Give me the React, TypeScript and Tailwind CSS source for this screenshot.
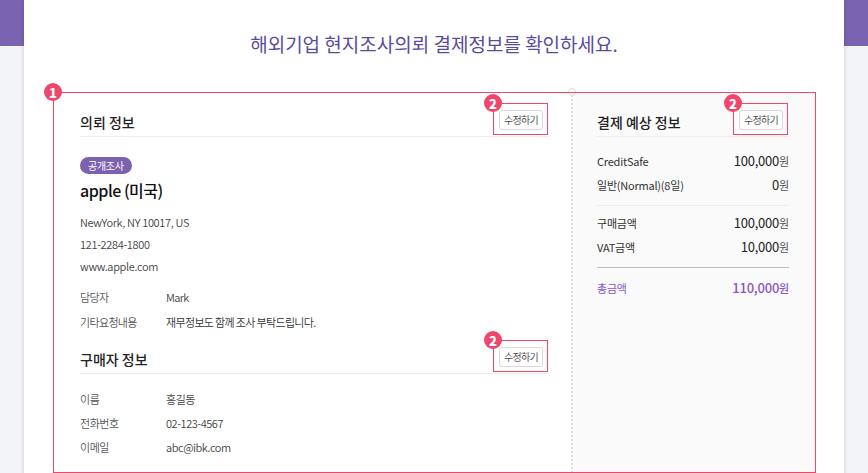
import React from 'react';

const RED = 'border-[#ef476b]';

function Badge({ n, className }: { n: number; className: string }) {
  return (
    <span
      className={`absolute flex h-[18px] w-[18px] items-center justify-center rounded-full bg-[#ef476b] text-[13px] font-extrabold leading-none text-white ${className}`}
    >
      {n}
    </span>
  );
}

function EditButton() {
  return (
    <span className="relative mb-[4px] mr-[6px] inline-flex">
      <button className="h-[20px] rounded-[3px] border border-[#d9d9d9] bg-white px-[4px] text-[10px] font-[350] leading-none tracking-[-0.07em] text-[#444]">
        수정하기
      </button>
      <span className={`pointer-events-none absolute -bottom-[5px] -left-[6px] -right-[5px] -top-[7px] border-[1.5px] ${RED}`} />
      <Badge n={2} className="-left-[15px] -top-[16px]" />
    </span>
  );
}

function SectionHeader({ title }: { title: string }) {
  return (
    <div className="flex h-[29px] items-center justify-between border-b border-[#ececec]">
      <h3 className="text-[14px] font-medium text-[#222]">{title}</h3>
      <EditButton />
    </div>
  );
}

function Amount({ value, purple }: { value: string; purple?: boolean }) {
  return (
    <span className={`text-[13px] ${purple ? 'font-medium text-[#8a57c6]' : 'text-[#222]'}`}>
      {value}
      <span className={`text-[11px] ${purple ? 'text-[#8a57c6]' : 'text-[#555]'}`}>원</span>
    </span>
  );
}

export default function App() {
  const buyer = [
    { label: '이름', value: '홍길동' },
    { label: '전화번호', value: '02-123-4567' },
    { label: '이메일', value: 'abc@ibk.com' },
  ];

  return (
    <div className="min-h-screen bg-[linear-gradient(to_bottom,#7a63b1_46px,#f3f4f7_46px)] font-['Noto_Sans_CJK_KR','Noto_Sans',sans-serif]">
      <div className="mx-[24px] bg-white pb-[40px] pt-[30px] shadow-[0_0_4px_rgba(0,0,0,0.18)]">
        <h1 className="text-center text-[19px] leading-[28px] text-[#5a4b9e]">
          해외기업 현지조사의뢰 결제정보를 확인하세요.
        </h1>

        {/* Content box */}
        <div className="relative ml-[29px] mr-[28px] mt-[34px] flex">
          {/* Left: 의뢰 정보 / 구매자 정보 */}
          <div className="w-[518px] shrink-0 pb-[14px] pl-[27px] pr-[22px] pt-[16px]">
            <SectionHeader title="의뢰 정보" />
            <span className="mt-[20px] inline-flex h-[17px] items-center rounded-full bg-[#7b61b0] px-[8px] text-[10px] tracking-[-0.03em] text-white">
              공개조사
            </span>
            <p className="mt-[3px] text-[16px] font-medium leading-[24px] tracking-[-0.03em] text-[#111]">apple (미국)</p>
            <div className="mt-[9px] text-[11px] font-[350] leading-[22px] tracking-[-0.03em] text-[#444]">
              <p>NewYork, NY 10017, US</p>
              <p>121-2284-1800</p>
              <p>www.apple.com</p>
            </div>
            <div className="mt-[9px] flex flex-col gap-[3px] text-[11px] font-[350] leading-[22px] tracking-[-0.06em]">
              <div className="flex">
                <span className="w-[86px] text-[#555]">담당자</span>
                <span className="text-[#444]">Mark</span>
              </div>
              <div className="flex">
                <span className="w-[86px] text-[#555]">기타요청내용</span>
                <span className="text-[#333]">재무정보도 함께 조사 부탁드립니다.</span>
              </div>
            </div>

            <div className="mt-[12px]">
              <SectionHeader title="구매자 정보" />
            </div>
            <div className="mt-[13px] text-[11px] font-[350] leading-[24px] tracking-[-0.04em]">
              {buyer.map(b => (
                <div key={b.label} className="flex">
                  <span className="w-[86px] text-[#555]">{b.label}</span>
                  <span className="text-[#444]">{b.value}</span>
                </div>
              ))}
            </div>
          </div>

          {/* Right: 결제 예상 정보 */}
          <div className="relative flex-1 border-l-2 border-dotted border-[#dcdcdc] bg-[#fafafa] pl-[24px] pr-[27px] pt-[16px]">
            <span className="absolute -left-[5px] -top-[4px] h-[8px] w-[8px] rounded-full border border-[#dcdcdc] bg-white" />
            <SectionHeader title="결제 예상 정보" />
            <div className="mt-[12px] text-[11px] leading-[24px] tracking-[-0.02em] text-[#333]">
              <div className="flex items-center justify-between">
                <span>CreditSafe</span>
                <Amount value="100,000" />
              </div>
              <div className="flex items-center justify-between">
                <span>일반(Normal)(8일)</span>
                <Amount value="0" />
              </div>
            </div>
            <div className="mt-[8px] border-t border-[#ececec] pt-[5px] text-[11px] leading-[24px] tracking-[-0.02em] text-[#333]">
              <div className="flex items-center justify-between">
                <span>구매금액</span>
                <Amount value="100,000" />
              </div>
              <div className="flex items-center justify-between">
                <span>VAT금액</span>
                <Amount value="10,000" />
              </div>
            </div>
            <div className="mt-[8px] flex items-center justify-between border-t border-[#bdbdbd] pt-[8px] text-[11px] leading-[24px] tracking-[-0.02em]">
              <span className="text-[#8a57c6]">총금액</span>
              <Amount value="110,000" purple />
            </div>
          </div>

          {/* Annotation 1 */}
          <span className={`pointer-events-none absolute inset-0 border-[1.5px] ${RED}`} />
          <Badge n={1} className="-left-[9px] -top-[9px]" />
        </div>
      </div>
    </div>
  );
}
